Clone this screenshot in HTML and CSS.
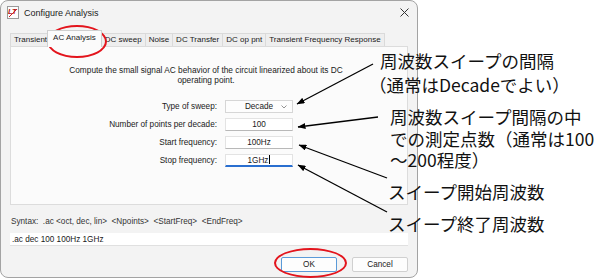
FILE: index.html
```html
<!DOCTYPE html>
<html lang="ja">
<head>
    <meta charset="UTF-8">
    <title>Configure Analysis</title>
    <link rel="stylesheet" href="styles.css">
</head>
<body>
    <div class="canvas">
        <div class="dialog">
            <div class="titlebar">
                <svg class="app-icon" width="12" height="13" viewBox="0 0 12 13">
                    <rect x="0.5" y="0.5" width="11" height="12" fill="#fdfdfd" stroke="#9a9a9a"/>
                    <text x="1" y="8" font-family="Liberation Sans, sans-serif" font-size="7.5" font-weight="bold" font-style="italic" fill="#b01818">LT</text>
                    <line x1="2" y1="11" x2="10" y2="3" stroke="#d02020" stroke-width="1"/>
                </svg>
                <span class="title">Configure Analysis</span>
                <svg class="close" width="9" height="9" viewBox="0 0 9 9">
                    <path d="M0.5 0.5 L8.5 8.5 M8.5 0.5 L0.5 8.5" stroke="#333" stroke-width="1"/>
                </svg>
            </div>

            <div class="tabs">
                <span class="tab">Transient</span>
                <span class="tab active">AC Analysis</span>
                <span class="tab">DC sweep</span>
                <span class="tab">Noise</span>
                <span class="tab">DC Transfer</span>
                <span class="tab">DC op pnt</span>
                <span class="tab">Transient Frequency Response</span>
            </div>

            <div class="panel">
                <p class="desc">Compute the small signal AC behavior of the circuit linearized about its DC<br>operating point.</p>
                <div class="form">
                    <label>Type of sweep:</label>
                    <div class="field select">Decade
                        <svg class="chevron" width="6" height="4" viewBox="0 0 6 4"><path d="M0.5 0.5 L3 3 L5.5 0.5" fill="none" stroke="#777" stroke-width="0.8"/></svg>
                    </div>
                    <label>Number of points per decade:</label>
                    <div class="field">100</div>
                    <label>Start frequency:</label>
                    <div class="field">100Hz</div>
                    <label>Stop frequency:</label>
                    <div class="field focused">1GHz<span class="caret"></span></div>
                </div>
            </div>

            <div class="syntax">Syntax:&nbsp; .ac &lt;oct, dec, lin&gt; &nbsp;&lt;Npoints&gt; &nbsp;&lt;StartFreq&gt; &nbsp;&lt;EndFreq&gt;</div>
            <div class="cmd">.ac dec 100 100Hz 1GHz</div>

            <div class="buttons">
                <button class="btn default">OK</button>
                <button class="btn">Cancel</button>
            </div>
        </div>

        <div class="note note-sweep">
            <span>周波数スイープの間隔</span>
            <span class="paren">（通常はDecadeでよい）</span>
        </div>
        <div class="note note-points">
            <span>周波数スイープ間隔の中</span>
            <span>での測定点数（通常は100</span>
            <span>～200程度）</span>
        </div>
        <div class="note note-start">スイープ開始周波数</div>
        <div class="note note-stop">スイープ終了周波数</div>

        <svg class="arrows" width="600" height="278" viewBox="0 0 600 278">
            <defs>
                <marker id="head" markerWidth="8" markerHeight="6" refX="7.5" refY="3" orient="auto" markerUnits="userSpaceOnUse">
                    <path d="M0 0 L8 3 L0 6 Z" fill="#000"/>
                </marker>
            </defs>
            <line x1="373" y1="64" x2="297" y2="104" stroke="#000" stroke-width="1.3" marker-end="url(#head)"/>
            <line x1="378" y1="117" x2="298" y2="127" stroke="#000" stroke-width="1.3" marker-end="url(#head)"/>
            <line x1="387" y1="178" x2="299" y2="145" stroke="#000" stroke-width="1.3" marker-end="url(#head)"/>
            <line x1="387" y1="212" x2="298" y2="165" stroke="#000" stroke-width="1.3" marker-end="url(#head)"/>
        </svg>

        <div class="ring ring-tab"></div>
        <div class="ring ring-ok"></div>
    </div>
</body>
</html>
```

FILE: styles.css
```css
body {
    margin: 0;
    background-color: #ffffff;
    font-family: "Liberation Sans", Arial, sans-serif;
    overflow: hidden;
}

.canvas {
    position: relative;
    width: 600px;
    height: 278px;
}

/* dialog window */
.dialog {
    box-sizing: border-box;
    width: 418px;
    height: 278px;
    border: 1px solid #a3a3a3;
    border-radius: 8px;
    background-color: #f3f3f3;
    display: flex;
    flex-direction: column;
    color: #1a1a1a;
}

.titlebar {
    height: 23px;
    display: flex;
    align-items: center;
    padding: 0 8px 0 6px;
}

.app-icon {
    flex: none;
}

.title {
    margin-left: 5px;
    font-size: 9px;
    color: #1a1a1a;
}

.close {
    margin-left: auto;
}

.tabs {
    height: 16px;
    margin-top: 6px;
    padding-left: 9px;
    display: flex;
    align-items: flex-end;
    font-size: 8px;
}

.tab {
    box-sizing: border-box;
    height: 13px;
    line-height: 12px;
    padding: 0 3px;
    background-color: #eeeeee;
    border: 1px solid #dadada;
    border-bottom: none;
    margin-right: -1px;
    white-space: nowrap;
}

.tab.active {
    position: relative;
    z-index: 1;
    height: 17px;
    line-height: 14px;
    margin: 0 -1px -1px -3px;
    padding: 0 5px;
    background-color: #fbfbfb;
    border-color: #cfcfcf;
}

.panel {
    height: 159px;
    box-sizing: border-box;
    margin: 0 9px;
    background-color: #fbfbfb;
    border: 1px solid #dcdcdc;
}

.desc {
    margin: 18px 6px 0 0;
    font-size: 8.3px;
    line-height: 10px;
    text-align: center;
}

.form {
    margin-top: 15px;
    display: grid;
    grid-template-columns: 206px 68px;
    grid-auto-rows: 13px;
    column-gap: 8px;
    row-gap: 5px;
    font-size: 8.2px;
}

.form label {
    text-align: right;
    line-height: 13px;
}

.field {
    position: relative;
    box-sizing: border-box;
    background-color: #ffffff;
    border: 1px solid #e3e3e3;
    border-bottom-color: #b8b8b8;
    line-height: 11px;
    text-align: center;
}

.select {
    background-color: #fdfdfd;
    border-color: #d6d6d6;
}

.chevron {
    position: absolute;
    right: 5px;
    top: 4px;
}

.focused {
    border-bottom: 2px solid #2a6fd0;
}

.caret {
    display: inline-block;
    width: 1px;
    height: 9px;
    margin-left: 1px;
    vertical-align: -1px;
    background-color: #000;
}

.syntax {
    margin: 12px 0 0 10px;
    font-size: 8.2px;
    line-height: 10px;
    color: #333;
}

.cmd {
    box-sizing: border-box;
    height: 13px;
    margin: 6px 9px 0;
    padding-left: 2px;
    background-color: #ffffff;
    border-bottom: 1px solid #e0e0e0;
    font-size: 8.2px;
    line-height: 13px;
}

.buttons {
    margin-top: 11px;
    padding-right: 9px;
    display: flex;
    justify-content: flex-end;
    gap: 15px;
}

.btn {
    box-sizing: border-box;
    width: 56px;
    height: 15px;
    padding: 0;
    background-color: #fdfdfd;
    border: 1px solid #d0d0d0;
    border-radius: 2px;
    font-family: "Liberation Sans", Arial, sans-serif;
    font-size: 8.2px;
    color: #1a1a1a;
}

.btn.default {
    border-color: #5b9ad8;
}

/* annotations drawn over the screenshot */
.note {
    position: absolute;
    font-family: "Noto Sans CJK JP", sans-serif;
    font-size: 17.5px;
    color: #111;
    white-space: nowrap;
}

.note span {
    display: block;
}

.note-sweep {
    left: 380px;
    top: 49px;
    line-height: 24px;
}

.note-sweep .paren {
    margin-left: -11px;
}

.note-points {
    left: 390px;
    top: 106px;
    line-height: 21.5px;
}

.note-start {
    left: 388px;
    top: 181px;
    line-height: 22px;
}

.note-stop {
    left: 388px;
    top: 213px;
    line-height: 22px;
}

.arrows {
    position: absolute;
    left: 0;
    top: 0;
    pointer-events: none;
}

.ring {
    position: absolute;
    box-sizing: border-box;
    border: 2px solid #e3141c;
    border-radius: 50%;
}

.ring-tab {
    left: 47px;
    top: 25px;
    width: 60px;
    height: 33px;
}

.ring-ok {
    left: 274px;
    top: 248px;
    width: 73px;
    height: 30px;
}
```
